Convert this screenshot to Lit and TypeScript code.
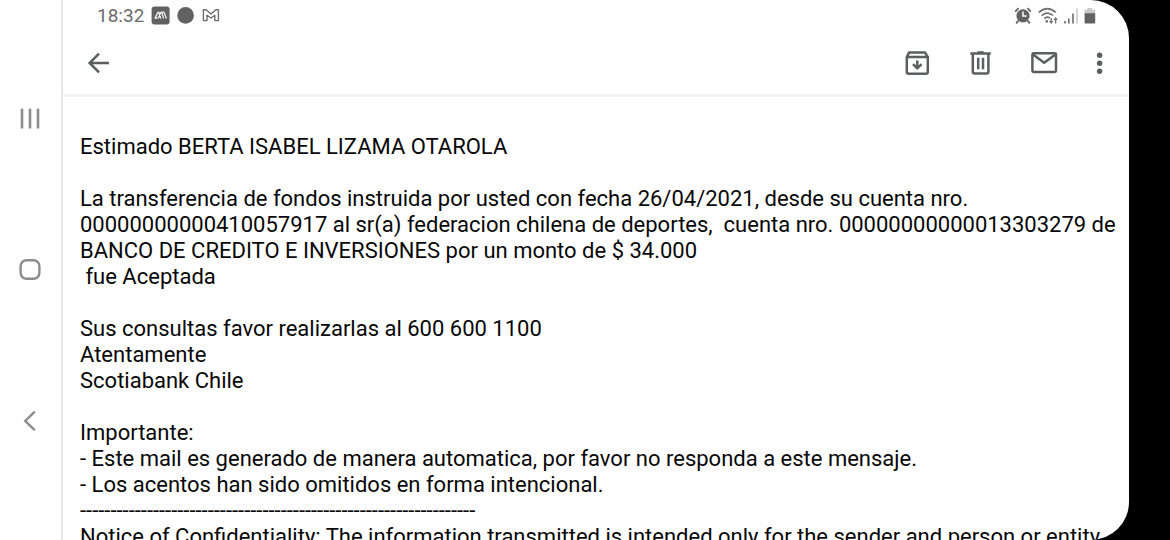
import { LitElement, html, css } from "lit";
import { customElement } from "lit/decorators.js";

const MESSAGE = [
  "Estimado BERTA ISABEL LIZAMA OTAROLA",
  "La transferencia de fondos instruida por usted con fecha 26/04/2021, desde su cuenta nro. 00000000000410057917 al sr(a) federacion chilena de deportes,  cuenta nro. 00000000000013303279 de BANCO DE CREDITO E INVERSIONES por un monto de $ 34.000\n fue Aceptada",
  "Sus consultas favor realizarlas al 600 600 1100\nAtentamente\nScotiabank Chile",
  "Importante:\n- Este mail es generado de manera automatica, por favor no responda a este mensaje.\n- Los acentos han sido omitidos en forma intencional.\n" +
    "-".repeat(65) +
    "\nNotice of Confidentiality: The information transmitted is intended only for the sender and person or entity",
];

@customElement("system-nav")
class SystemNav extends LitElement {
  static styles = css`
    :host {
      box-sizing: border-box;
      display: flex;
      flex-direction: column;
      flex: none;
      width: 63px;
      padding: 43px 0;
      border-right: 2px solid #e6e6e6;
    }
    button {
      flex: 1;
      display: grid;
      place-items: center;
      margin: 0;
      padding: 0 1px 0 0;
      border: 0;
      background: none;
      color: #8c8c8c;
    }
    svg {
      display: block;
      fill: none;
      stroke: currentColor;
    }
  `;
  render() {
    return html`
      <button aria-label="Recientes">
        <svg width="24" height="24" viewBox="0 0 24 24" stroke-width="2.6">
          <path d="M4 1.8v19.6M12 1.8v19.6M20 1.8v19.6" />
        </svg>
      </button>
      <button aria-label="Inicio">
        <svg width="24" height="24" viewBox="0 0 24 24" stroke-width="2.4">
          <rect x="2.6" y="2.2" width="18.8" height="18.6" rx="6" />
        </svg>
      </button>
      <button aria-label="Atrás">
        <svg width="24" height="24" viewBox="0 0 24 24" stroke-width="2.4">
          <path d="M16.8 2.6L7.2 12l9.6 9.2" />
        </svg>
      </button>
    `;
  }
}

@customElement("status-bar")
class StatusBar extends LitElement {
  static styles = css`
    :host {
      display: flex;
      align-items: center;
      justify-content: space-between;
      height: 32px;
      padding: 0 33px 0 34px;
      color: #626262;
    }
    .group {
      display: flex;
      align-items: center;
      gap: 7px;
    }
    .signals {
      gap: 6px;
    }
    .time {
      font-size: 19px;
      line-height: 32px;
      color: #6c6c6c;
    }
    svg {
      display: block;
    }
  `;
  render() {
    return html`
      <div class="group">
        <span class="time">18:32</span>
        <svg width="19" height="20" viewBox="0 0 19 20">
          <rect x="0.6" y="0.4" width="18" height="18" rx="3" fill="#626262" />
          <path d="M3.8 12.6L6.8 6.6Q7.4 5.6 8 6.6L9.8 12.6M7.4 12.2L9.6 6.8Q10.2 5.8 10.8 6.8L12.6 12.4M10.4 6.2L12.4 6.2Q13 6.2 13.4 7.2L15.4 12.6M3.8 12.2h3" fill="none" stroke="#f4f4f4" stroke-width="1.3" />
        </svg>
        <svg width="18" height="20" viewBox="0 0 18 20"><circle cx="8.6" cy="9.4" r="8.3" fill="#626262" /></svg>
        <svg width="18" height="20" viewBox="0 0 18 20">
          <path d="M1.4 14.6V3.8h2.6L9 8l4.8-4.2h2.6v10.8h-3.6V9.2L9 12 5 9.2v5.4z" fill="none" stroke="#6c6c6c" stroke-width="1.4" stroke-linejoin="round" />
        </svg>
      </div>
      <div class="group signals">
        <svg width="18" height="20" viewBox="0 0 18 20">
          <circle cx="9" cy="9.8" r="6.6" fill="#626262" />
          <path d="M1.2 5.6L4.6 2.2M16.8 5.6L13.4 2.2M4.4 14.6l-2.2 2.8M13.6 14.6l2.2 2.8" fill="none" stroke="#626262" stroke-width="1.8" />
          <path d="M9 5.6V10h3.6" fill="none" stroke="#fff" stroke-width="1.5" />
        </svg>
        <svg width="20" height="20" viewBox="0 0 20 20" fill="none" stroke="#707070" stroke-width="1.7">
          <path d="M0.8 6.4Q9 -1.2 17.8 6.4M3.6 9.6Q9 4.6 15 9.4M6.4 12.6Q9 10.2 11.8 12" />
          <circle cx="8.8" cy="15.4" r="1.3" fill="#707070" stroke="none" />
          <path d="M13.2 12v4M17.6 17.4v-5" stroke-width="1.3" />
          <path d="M11 15h4.4l-2.2 3zM15.4 14h4.4l-2.2-3z" fill="#707070" stroke="none" />
        </svg>
        <svg width="14" height="20" viewBox="0 0 14 20" stroke-width="1.5">
          <path d="M1 15v2.6M4.8 12.6v5M9 7.6v10" stroke="#626262" />
          <path d="M13 2.6v15" stroke="#c8c8c8" />
        </svg>
        <svg width="12" height="20" viewBox="0 0 12 20">
          <path d="M3.4 2h5v1.8h2.8V8H0.6V3.8h2.8z" fill="#c9c9c9" />
          <path d="M0.6 7.2h10.6v9.2a1 1 0 0 1-1 1H1.6a1 1 0 0 1-1-1z" fill="#626262" />
        </svg>
      </div>
    `;
  }
}

@customElement("mail-toolbar")
class MailToolbar extends LitElement {
  static styles = css`
    :host {
      display: flex;
      align-items: center;
      justify-content: space-between;
      height: 62px;
      padding: 0 23px 0 22px;
      border-bottom: 3px solid #f3f3f3;
      color: #5c5e61;
    }
    .actions {
      display: flex;
      gap: 36px;
    }
    button {
      margin: 0;
      padding: 0;
      border: 0;
      background: none;
      color: inherit;
    }
    svg {
      display: block;
      fill: none;
      stroke: currentColor;
      stroke-width: 2.5;
      stroke-linejoin: round;
    }
  `;
  render() {
    return html`
      <button aria-label="Volver">
        <svg width="28" height="28" viewBox="0 0 28 28">
          <path d="M24 14H5M14 4.6L4.6 14l9.4 9.4" stroke-linejoin="miter" />
        </svg>
      </button>
      <div class="actions">
        <button aria-label="Archivar">
          <svg width="28" height="28" viewBox="0 0 28 28">
            <path d="M4.8 8L7 3.6h16L25.8 8v14.8a2 2 0 0 1-2 2h-17a2 2 0 0 1-2-2zM5 8h20.6" />
            <path d="M15.3 11.4v7.6M11 15.2l4.3 4.2 4.3-4.2" />
          </svg>
        </button>
        <button aria-label="Eliminar">
          <svg width="28" height="28" viewBox="0 0 28 28">
            <path d="M4.4 4.4h20.4M11.4 3.4h6.4M6.8 4.6v17.8a2 2 0 0 0 2 2h11.6a2 2 0 0 0 2-2V4.6" />
            <path d="M12.2 8.8v11.4M17 8.8v11.4" />
          </svg>
        </button>
        <button aria-label="Marcar como no leído">
          <svg width="28" height="28" viewBox="0 0 28 28">
            <rect x="2.4" y="4.2" width="23.6" height="18.8" rx="1.2" />
            <path d="M3 5.4l11.2 8.4L25.4 5.4" />
          </svg>
        </button>
        <button aria-label="Más opciones">
          <svg width="12" height="28" viewBox="0 0 12 28">
            <g fill="currentColor" stroke="none">
              <circle cx="5.6" cy="6.2" r="2.7" />
              <circle cx="5.6" cy="14.2" r="2.7" />
              <circle cx="5.6" cy="22.2" r="2.7" />
            </g>
          </svg>
        </button>
      </div>
    `;
  }
}

@customElement("app-root")
class AppRoot extends LitElement {
  static styles = css`
    :host {
      box-sizing: border-box;
      display: block;
      height: 100vh;
      padding-right: 41px;
      overflow: hidden;
      background: #000;
      font-family: Roboto, "Liberation Sans", sans-serif;
    }
    .screen {
      display: flex;
      height: 100%;
      overflow: hidden;
      border-radius: 0 38px 38px 0;
      background: #fefefe;
    }
    .mail {
      flex: 1;
      min-width: 0;
    }
    .message {
      padding: 37px 12px 0 17px;
      font-size: 22px;
      line-height: 26px;
      color: #080808;
    }
    p {
      margin: 0 0 26px;
      white-space: pre-wrap;
    }
  `;
  render() {
    return html`
      <div class="screen">
        <system-nav></system-nav>
        <main class="mail">
          <status-bar></status-bar>
          <mail-toolbar></mail-toolbar>
          <article class="message">${MESSAGE.map((text) => html`<p>${text}</p>`)}</article>
        </main>
      </div>
    `;
  }
}
